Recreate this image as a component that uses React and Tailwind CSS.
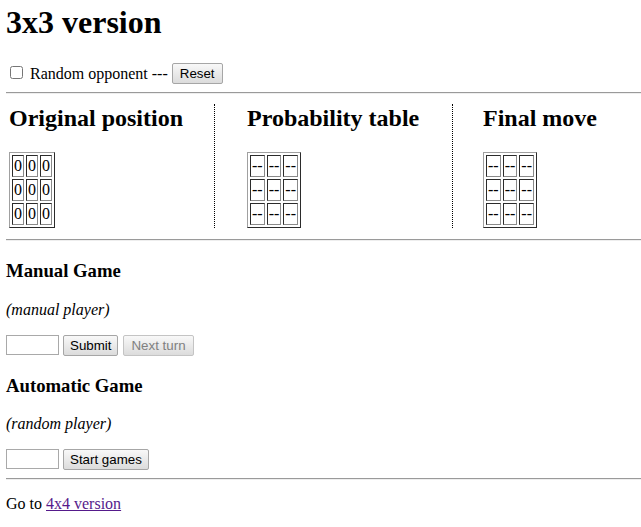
import React from 'react';

const btn =
  "h-[21px] px-[6px] border rounded-[2px] font-['Liberation_Sans',Arial,sans-serif] text-[13.33px] leading-[15px] bg-linear-to-b from-[#f8f8f8] to-[#dcdcdc]";

const Board = ({ value }) => (
  <table className="border-separate border-spacing-[2px] border border-t-[#a0a0a0] border-l-[#a0a0a0] border-r-[#2b2b2b] border-b-[#2b2b2b]">
    <tbody>
      {[0, 1, 2].map((r) => (
        <tr key={r}>
          {[0, 1, 2].map((c) => (
            <td
              key={c}
              className="p-[1px] border border-t-[#2b2b2b] border-l-[#2b2b2b] border-r-[#8a8a8a] border-b-[#8a8a8a] leading-[18px]"
            >
              {value}
            </td>
          ))}
        </tr>
      ))}
    </tbody>
  </table>
);

const Rule = ({ className }) => (
  <div className={`h-0 border-t border-b border-t-[#9a9a9a] border-b-[#eeeeee] ${className}`} />
);

export default function App() {
  return (
    <div className="font-['Liberation_Serif','Times_New_Roman',serif] text-[16px] text-black bg-white pl-[6px] h-[527px] overflow-hidden">
      <h1 className="mt-[4px] text-[32px] font-bold leading-[37px]">3x3 version</h1>

      <div className="mt-[22px] h-[21px] flex items-center">
        <input type="checkbox" className="self-start mt-[3px] ml-[4px] mr-[3px] w-[13px] h-[13px]" />
        <span className="ml-[4px] leading-[18px]">Random opponent ---</span>
        <button className={`${btn} ml-[4px] px-[7px] border-[#a6a6a6]`}>Reset</button>
      </div>

      <Rule className="mt-[8px]" />

      <div className="mt-[10px] flex">
        <div className="w-[209px] pl-[3px] border-r border-dotted border-black">
          <h2 className="text-[24px] font-bold leading-[28px] mb-[20px]">Original position</h2>
          <Board value="0" />
        </div>
        <div className="w-[238px] pl-[32px] border-r border-dotted border-black">
          <h2 className="text-[24px] font-bold leading-[28px] mb-[20px]">Probability table</h2>
          <Board value="--" />
        </div>
        <div className="pl-[30px]">
          <h2 className="text-[24px] font-bold leading-[28px] mb-[20px]">Final move</h2>
          <Board value="--" />
        </div>
      </div>

      <Rule className="mt-[11px]" />

      <h3 className="mt-[19px] text-[18.72px] font-bold leading-[22px]">Manual Game</h3>
      <p className="mt-[19px] italic leading-[18px]">(manual player)</p>
      <div className="mt-[16px] flex items-start gap-[4px]">
        <input type="text" className="w-[53px] h-[20px] border border-[#a9a9a9] bg-white" />
        <button className={`${btn} border-[#a6a6a6]`}>Submit</button>
        <button disabled className={`${btn} ml-[1px] px-[7px] border-[#c4c4c4] text-[#808080]`}>
          Next turn
        </button>
      </div>

      <h3 className="mt-[19px] text-[18.72px] font-bold leading-[22px]">Automatic Game</h3>
      <p className="mt-[18px] italic leading-[18px]">(random player)</p>
      <div className="mt-[16px] flex items-start gap-[4px]">
        <input type="text" className="w-[53px] h-[20px] border border-[#a9a9a9] bg-white" />
        <button className={`${btn} border-[#a6a6a6]`}>Start games</button>
      </div>

      <Rule className="mt-[8px]" />

      <p className="mt-[15px] leading-[18px]">
        Go to{' '}
        <a href="#" className="text-[#551a8b] underline">
          4x4 version
        </a>
      </p>
    </div>
  );
}
